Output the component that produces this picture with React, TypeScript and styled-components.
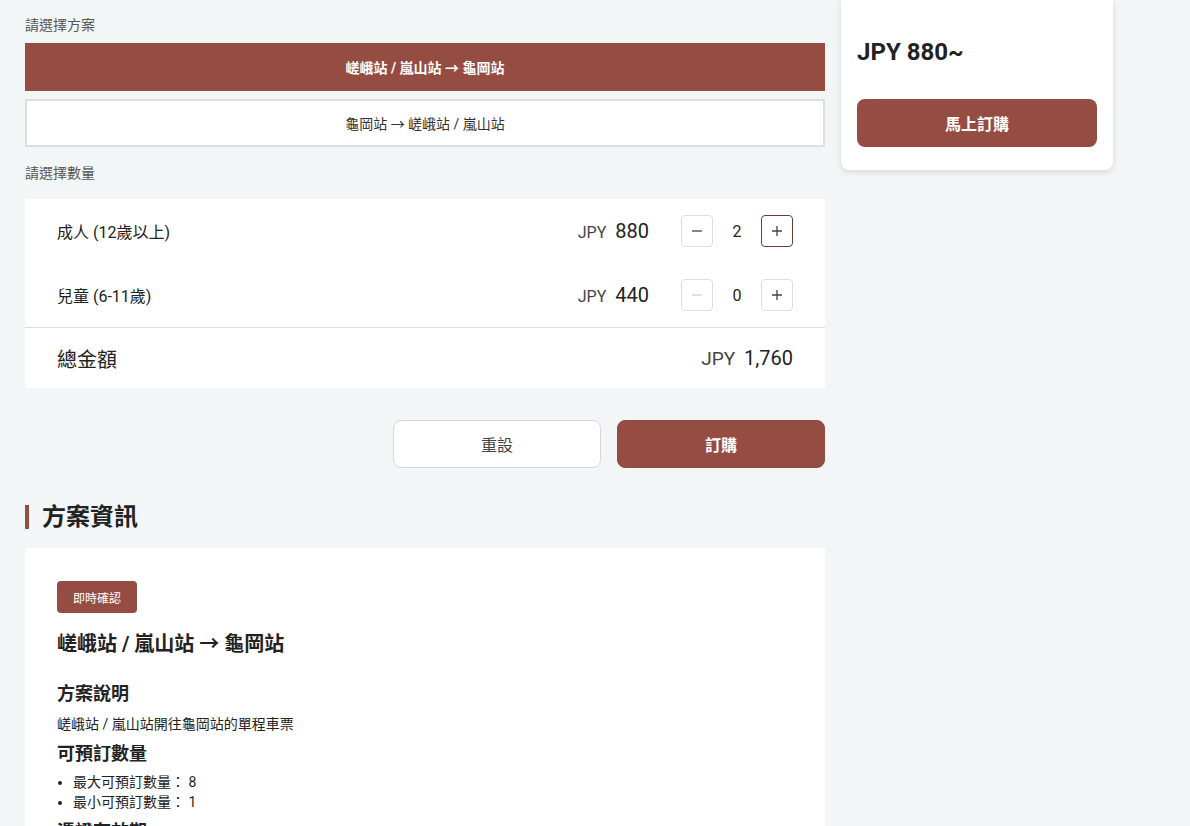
import React from "react";
import styled, { createGlobalStyle } from "styled-components";

const Global = createGlobalStyle`
  html, body { margin: 0; padding: 0; background: #f3f6f7; }
  body { font-family: Roboto, "Noto Sans CJK TC", "Noto Sans", sans-serif; color: #222; }
  * { box-sizing: border-box; }
`;

const PRIMARY = "#954d43";

const Page = styled.div`
  display: flex;
  align-items: flex-start;
  gap: 16px;
  padding: 0 0 0 25px;
  height: 826px;
  overflow: hidden;
`;

const Main = styled.div`
  width: 800px;
  display: flex;
  flex-direction: column;
  padding-top: 16px;
`;

const FieldLabel = styled.div<{ $mt?: number }>`
  font-size: 14px;
  line-height: 18px;
  color: #555;
  margin-top: ${(p) => p.$mt ?? 0}px;
  margin-bottom: ${(p) => (p.$mt ? 17 : 9)}px;
`;

const OptionList = styled.div`
  display: flex;
  flex-direction: column;
  gap: 8px;
`;

const Option = styled.button<{ $active?: boolean }>`
  height: 48px;
  width: 100%;
  border: ${(p) => (p.$active ? "none" : "2px solid #dcdfe0")};
  background: ${(p) => (p.$active ? PRIMARY : "#fff")};
  color: ${(p) => (p.$active ? "#fff" : "#333")};
  font-family: inherit;
  font-size: 14px;
  font-weight: ${(p) => (p.$active ? 700 : 400)};
  display: flex;
  align-items: center;
  justify-content: center;
  padding: 0;
`;

const QtyPanel = styled.div`
  background: #fff;
  display: flex;
  flex-direction: column;
`;

const QtyRow = styled.div`
  height: 64px;
  display: flex;
  align-items: center;
  padding: 0 32px;
`;

const RowLabel = styled.div`
  flex: 1;
  font-size: 16px;
  color: #222;
`;

const Price = styled.div<{ $flush?: boolean }>`
  display: flex;
  align-items: baseline;
  gap: 9px;
  margin-right: ${(p) => (p.$flush ? 0 : 32)}px;
`;

const Cur = styled.span<{ $big?: boolean }>`
  font-size: ${(p) => (p.$big ? 19 : 16)}px;
  color: #444;
`;

const Amount = styled.span<{ $big?: boolean }>`
  font-size: ${(p) => (p.$big ? 20 : 20)}px;
  color: #222;
`;

const Stepper = styled.div`
  display: flex;
  align-items: center;
`;

const StepBtn = styled.button<{ $focus?: boolean; $disabled?: boolean }>`
  width: 32px;
  height: 32px;
  border: 1px solid ${(p) => (p.$focus ? "#6f3b35" : "#dedede")};
  border-radius: 4px;
  background: #fff;
  display: flex;
  align-items: center;
  justify-content: center;
  padding: 0;
  color: ${(p) => (p.$disabled ? "#d0d0d0" : "#444")};
`;

const Count = styled.div`
  width: 48px;
  text-align: center;
  font-size: 16px;
  color: #222;
`;

const TotalRow = styled.div`
  height: 61px;
  border-top: 1px solid #dcdcdc;
  display: flex;
  align-items: center;
  justify-content: space-between;
  padding: 0 32px;
`;

const TotalLabel = styled.div`
  font-size: 20px;
  color: #222;
`;

const Actions = styled.div`
  display: flex;
  justify-content: flex-end;
  gap: 16px;
  margin-top: 32px;
`;

const ActionBtn = styled.button<{ $primary?: boolean }>`
  width: 208px;
  height: 48px;
  border-radius: 8px;
  border: 1px solid ${(p) => (p.$primary ? PRIMARY : "#d6d9db")};
  background: ${(p) => (p.$primary ? PRIMARY : "#fff")};
  color: ${(p) => (p.$primary ? "#fff" : "#444")};
  font-family: inherit;
  font-size: 16px;
  font-weight: ${(p) => (p.$primary ? 700 : 400)};
`;

const SectionHeading = styled.h2`
  margin: 37px 0 19px;
  height: 24px;
  display: flex;
  align-items: center;
  border-left: 4px solid ${PRIMARY};
  padding-left: 13px;
  font-size: 24px;
  line-height: 24px;
  font-weight: 700;
  color: #222;
`;

const InfoPanel = styled.div`
  background: #fff;
  padding: 33px 32px 40px;
  display: flex;
  flex-direction: column;
  align-items: flex-start;
`;

const Tag = styled.span`
  height: 32px;
  width: 80px;
  border-radius: 4px;
  background: ${PRIMARY};
  color: #fff;
  font-size: 12px;
  display: flex;
  align-items: center;
  justify-content: center;
`;

const PlanTitle = styled.h3`
  margin: 17px 0 0;
  font-size: 20px;
  line-height: 28px;
  font-weight: 700;
  color: #222;
`;

const SubTitle = styled.h4<{ $mt: number }>`
  margin: ${(p) => p.$mt}px 0 0;
  font-size: 18px;
  line-height: 26px;
  font-weight: 700;
  color: #222;
`;

const Text = styled.p`
  margin: 7px 0 0;
  font-size: 14px;
  line-height: 20px;
  color: #222;
`;

const List = styled.ul`
  margin: 5px 0 0;
  padding-left: 16px;
  font-size: 14px;
  line-height: 20px;
  color: #222;
`;

const Side = styled.aside`
  width: 272px;
  background: #fff;
  border-radius: 0 0 8px 8px;
  box-shadow: 0 2px 6px rgba(0, 0, 0, 0.12);
  padding: 24px 16px 23px;
  display: flex;
  flex-direction: column;
`;

const SidePrice = styled.div`
  font-size: 24px;
  line-height: 56px;
  font-weight: 700;
  color: #222;
  margin-bottom: 19px;
`;

const BuyBtn = styled.button`
  height: 48px;
  width: 100%;
  border: none;
  border-radius: 8px;
  background: ${PRIMARY};
  color: #fff;
  font-family: inherit;
  font-size: 16px;
  font-weight: 700;
`;

const MinusIcon = () => (
  <svg width="14" height="14" viewBox="0 0 14 14">
    <path d="M2 7h10" stroke="currentColor" strokeWidth="1.3" />
  </svg>
);
const PlusIcon = () => (
  <svg width="14" height="14" viewBox="0 0 14 14">
    <path d="M2 7h10M7 2v10" stroke="currentColor" strokeWidth="1.3" />
  </svg>
);

const rows = [
  { label: "成人 (12歲以上)", price: "880", count: 2, minusDisabled: false, plusFocus: true },
  { label: "兒童 (6-11歲)", price: "440", count: 0, minusDisabled: true, plusFocus: false },
];

export default function App() {
  return (
    <>
      <Global />
      <Page>
        <Main>
          <FieldLabel>請選擇方案</FieldLabel>
          <OptionList>
            <Option $active>嵯峨站 / 嵐山站 → 龜岡站</Option>
            <Option>龜岡站 → 嵯峨站 / 嵐山站</Option>
          </OptionList>
          <FieldLabel $mt={17}>請選擇數量</FieldLabel>
          <QtyPanel>
            {rows.map((r) => (
              <QtyRow key={r.label}>
                <RowLabel>{r.label}</RowLabel>
                <Price>
                  <Cur>JPY</Cur>
                  <Amount>{r.price}</Amount>
                </Price>
                <Stepper>
                  <StepBtn $disabled={r.minusDisabled}>
                    <MinusIcon />
                  </StepBtn>
                  <Count>{r.count}</Count>
                  <StepBtn $focus={r.plusFocus}>
                    <PlusIcon />
                  </StepBtn>
                </Stepper>
              </QtyRow>
            ))}
            <TotalRow>
              <TotalLabel>總金額</TotalLabel>
              <Price $flush>
                <Cur $big>JPY</Cur>
                <Amount $big>1,760</Amount>
              </Price>
            </TotalRow>
          </QtyPanel>
          <Actions>
            <ActionBtn>重設</ActionBtn>
            <ActionBtn $primary>訂購</ActionBtn>
          </Actions>
          <SectionHeading>方案資訊</SectionHeading>
          <InfoPanel>
            <Tag>即時確認</Tag>
            <PlanTitle>嵯峨站 / 嵐山站 → 龜岡站</PlanTitle>
            <SubTitle $mt={23}>方案說明</SubTitle>
            <Text>嵯峨站 / 嵐山站開往龜岡站的單程車票</Text>
            <SubTitle $mt={7}>可預訂數量</SubTitle>
            <List>
              <li>最大可預訂數量： 8</li>
              <li>最小可預訂數量： 1</li>
            </List>
            <SubTitle $mt={7}>憑證有效期</SubTitle>
          </InfoPanel>
        </Main>
        <Side>
          <SidePrice>JPY 880~</SidePrice>
          <BuyBtn>馬上訂購</BuyBtn>
        </Side>
      </Page>
    </>
  );
}
